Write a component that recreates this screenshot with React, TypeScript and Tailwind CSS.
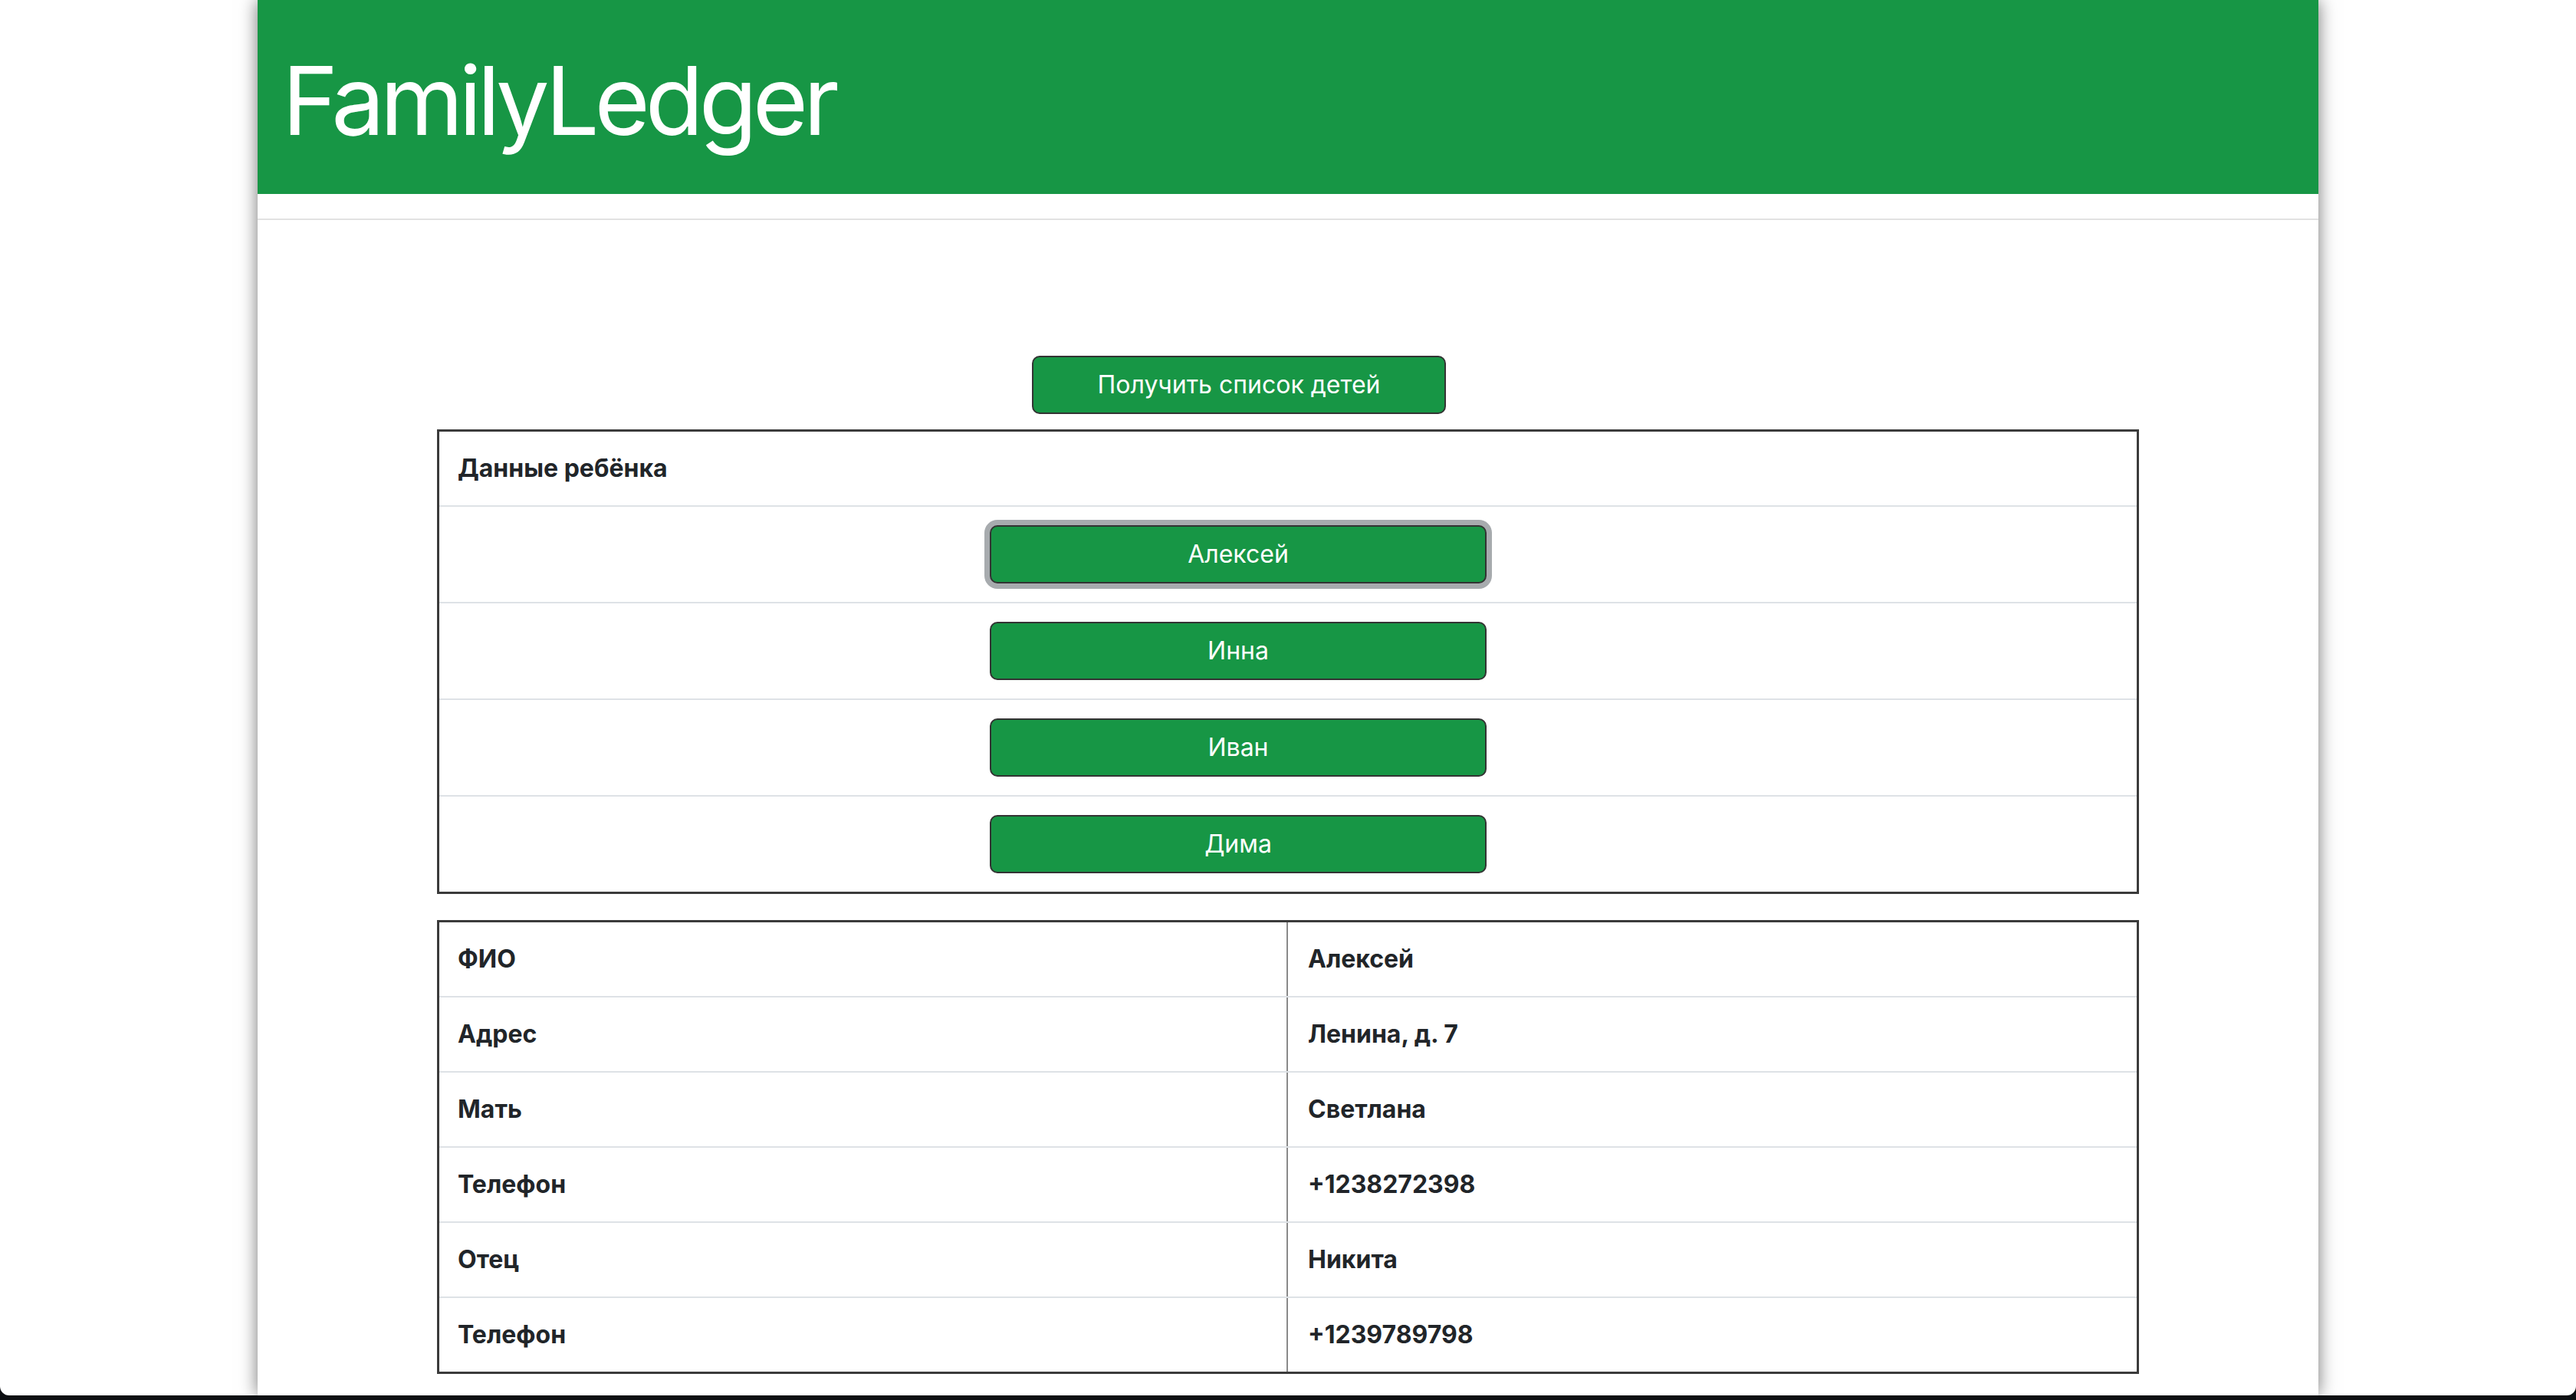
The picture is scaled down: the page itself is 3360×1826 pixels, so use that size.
import React from "react";

const font = { fontFamily: "Inter, 'Noto Sans', 'Liberation Sans', sans-serif" };

const children = ["Алексей", "Инна", "Иван", "Дима"];

const details: [string, string][] = [
  ["ФИО", "Алексей"],
  ["Адрес", "Ленина, д. 7"],
  ["Мать", "Светлана"],
  ["Телефон", "+1238272398"],
  ["Отец", "Никита"],
  ["Телефон", "+1239789798"],
];

export default function App() {
  return (
    <div className="h-[1826px] w-[3360px] bg-[#0d0f12] overflow-hidden" style={font}>
      <div className="h-[1820px] w-full bg-white rounded-b-[12px] overflow-hidden flex justify-center">
        <div className="w-[2688px] h-full bg-white shadow-[0_0_22px_rgba(0,0,0,0.55)] flex flex-col">
          <header className="h-[253px] bg-[#179645] flex items-center pl-[32px] pt-[8px]">
            <h1 className="text-white text-[124px] leading-none font-normal tracking-[-6px]">FamilyLedger</h1>
          </header>
          <div className="h-[32px]" />
          <div className="h-[2px] bg-[#e2e2e2]" />

          <div className="flex justify-center pr-[128px] mt-[177px]">
            <button className="w-[540px] h-[76px] bg-[#179645] text-white text-[32px] border-2 border-[#333] rounded-[10px]">
              Получить список детей
            </button>
          </div>

          <div className="mx-[234px] mt-[20px] border-[3px] border-[#3b3b3b] text-[#212529]">
            <div className="h-[96px] flex items-center pl-[24px] text-[32px] font-bold">Данные ребёнка</div>
            {children.map((name, i) => (
              <div key={name} className="border-t-2 border-[#dee2e6] h-[126px] flex items-center justify-center pr-[130px]">
                <button
                  className={
                    i === 0
                      ? "w-[648px] h-[76px] bg-[#179645] text-white text-[32px] border-2 border-[#333] rounded-[10px] ring-[7px] ring-[#a7abae]"
                      : "w-[648px] h-[76px] bg-[#179645] text-white text-[32px] border-2 border-[#333] rounded-[10px]"
                  }
                >
                  {name}
                </button>
              </div>
            ))}
          </div>

          <div className="mx-[234px] mt-[34px] border-[3px] border-[#3b3b3b] text-[#212529]">
            {details.map(([label, value], i) => (
              <div
                key={i}
                className={
                  i === 0
                    ? "grid grid-cols-2 h-[96px]"
                    : "grid grid-cols-2 h-[98px] border-t-2 border-[#dee2e6]"
                }
              >
                <div className="flex items-center pl-[24px] text-[32px] font-bold border-r-2 border-[#8a8a8a]">{label}</div>
                <div className="flex items-center pl-[26px] text-[32px] font-bold">{value}</div>
              </div>
            ))}
          </div>
        </div>
      </div>
    </div>
  );
}
